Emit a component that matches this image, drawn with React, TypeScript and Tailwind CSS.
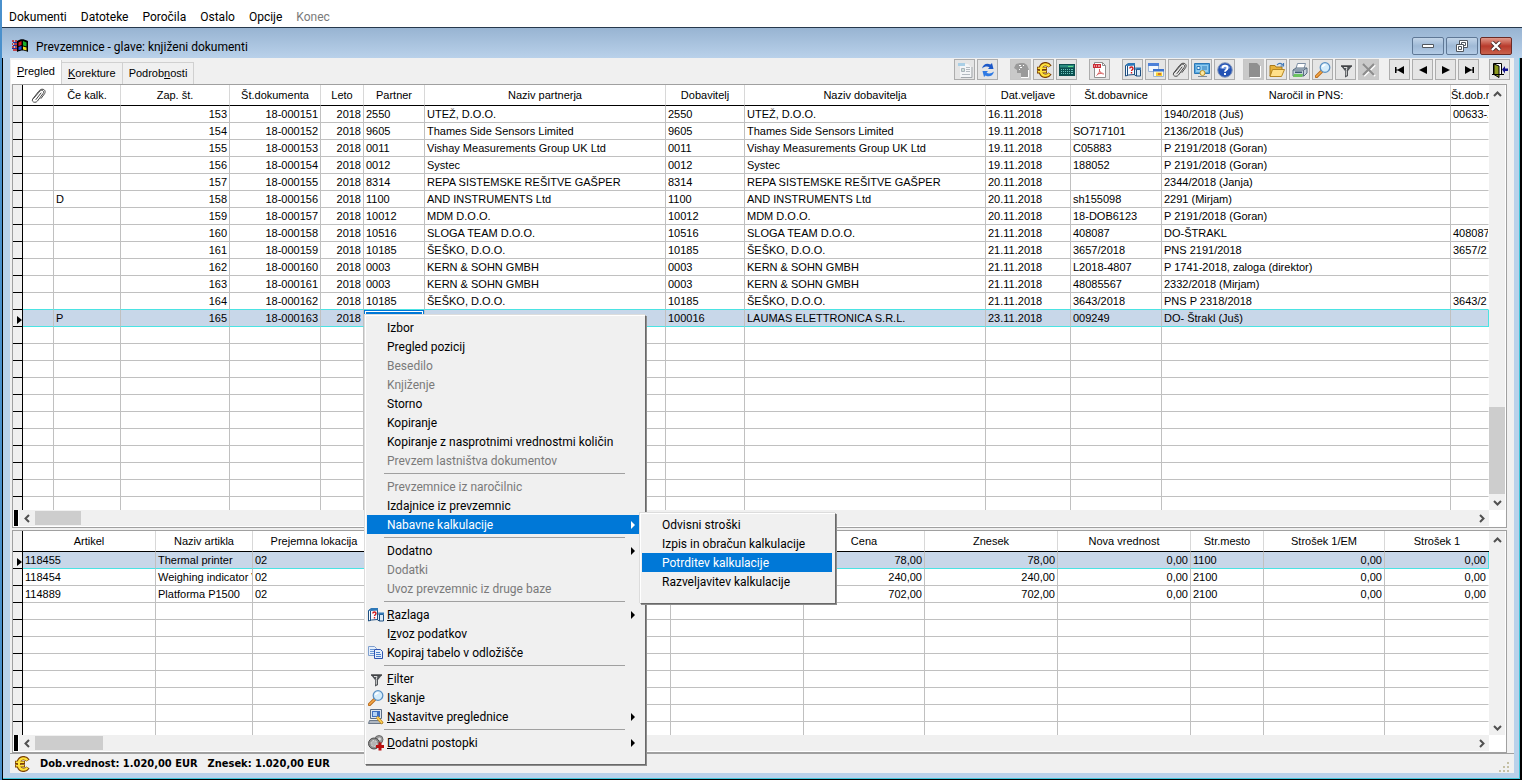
import { useState } from 'react';
import type { ReactNode } from 'react';
import clsx from 'clsx';

type Align = 'left' | 'right';

interface Column {
  title: ReactNode;
  width?: number;
  align?: Align;
}

interface MenuEntry {
  label: string;
  hotkey?: number;
  icon?: ReactNode;
  disabled?: boolean;
  submenu?: boolean;
}

/* ---------- icons ---------- */

function Icon({ children, size = 16 }: { children: ReactNode; size?: number }) {
  return (
    <svg viewBox="0 0 16 16" width={size} height={size} fill="none" aria-hidden="true" className="block shrink-0">
      {children}
    </svg>
  );
}

const ReportIcon = () => (
  <Icon>
    <path d="M3 2h8l3 3v10H3z" fill="#f3f5f7" />
    <path d="M4 15.500h11V5" stroke="#a3a8ad" />
    <path d="M1 1h7v3H1z" fill="#a9cfe6" />
    <path d="M9 5.500h4M9 7.500h4M9 9.500h4M5 12.500h8" stroke="#b4bbc1" />
    <path d="M4.500 6.500h3v3h-3z" fill="#cfe0d8" stroke="#a9b3bb" />
  </Icon>
);

const RefreshIcon = () => (
  <Icon>
    <path d="M2 6.500C3 2 7 .500 10.500 2.500L12 1l1.500 6H8l1.500-1.800C7 4 4.500 4.500 2 6.500z" fill="#1c58c8" />
    <path d="M14 9.500c-1 4.500-5 6-8.500 4L4 15 2.500 9H8l-1.500 1.800C9 12 11.500 11.500 14 9.500z" fill="#2f7ae4" />
  </Icon>
);

const StampIcon = () => (
  <Icon>
    <path d="M1 6l2-4 4-1h4l3 2 2 5v7H8v-4H4V8z" fill="#9a9a9a" />
    <path d="M6 3.500h2M10 3.500h1M7 5.500h2M6 7.500h1" stroke="#fff" />
    <path d="M15.500 8v7.500H8" stroke="#fff" />
  </Icon>
);

const EuroIcon = () => (
  <Icon>
    <path d="M14 4.500C11.500.800 6 1.200 4.800 5.500v5c1.200 4.300 6.700 4.700 9.200 1" stroke="#7a3f00" strokeWidth="4" />
    <path d="M1 6.300h10M1 9.800h10" stroke="#7a3f00" strokeWidth="3.200" />
    <path d="M13.500 4.200C11 1.300 6.500 1.700 5 5.500v5c1.500 3.800 6 4.200 8.500 1.300" stroke="#ffe23c" strokeWidth="2.200" />
    <path d="M1.800 6.300h8.400M1.800 9.800h8.400" stroke="#ffe23c" strokeWidth="1.600" />
  </Icon>
);

const CalculatorIcon = () => (
  <Icon>
    <path d="M0 2h16v12H0z" fill="#0b4f4f" />
    <path d="M1 3h14v2.500H1z" fill="#2a8a80" />
    <path d="M9 4.500h5" stroke="#5fe08a" />
    <path
      d="M2 7.500h1m1 0h1m1 0h1m1 0h1m1 0h1m1 0h2M2 9.500h1m1 0h1m1 0h1m1 0h1m1 0h1m1 0h2M2 11.500h1m1 0h1m1 0h1m1 0h1m1 0h1m1 0h2"
      stroke="#6cc4bd"
    />
  </Icon>
);

const PdfIcon = () => (
  <Icon>
    <path d="M2.500.500h8l3 3v12h-11z" fill="#fff" stroke="#8f8f8f" />
    <path d="M10.500.500v3h3" stroke="#8f8f8f" />
    <path d="M1 2h8v4H1z" fill="#cc2a33" />
    <path d="M2 4h1m1 0h1m1 0h2" stroke="#fff" />
    <path d="M7.500 7c.500 3-1 5-3 6.500M7.500 8.500c1 2.500 2.500 3.500 4.500 3.500M5.500 12l5-1" stroke="#d86060" />
  </Icon>
);

const ExplainIcon = () => (
  <Icon>
    <path d="M.500 3.500l3-2h6v11l-6 .500-3 1z" fill="#f7fbff" stroke="#1f4f80" />
    <path d="M0 3.500l3.500-2.500H10v2.500L3 4z" fill="#2e78b8" />
    <path d="M2.500 4v9.500" stroke="#1f4f80" />
    <path d="M4.800 6.500c0-2 3.200-2 3.200 0 0 1.200-1.500 1.200-1.500 2.500M6.500 10v1.500" stroke="#d01818" strokeWidth="1.400" />
    <path d="M9.500 6.500l2 1h4v6.500h-4l-2-1z" fill="#dcebf8" stroke="#1f4f80" />
    <path d="M10 5.500h6v2h-4z" fill="#2e78b8" />
    <path d="M11.500 7.500v6.500" stroke="#1f4f80" />
  </Icon>
);

const WindowsIcon = () => (
  <Icon>
    <path d="M.500 1.500h10v8h-10z" fill="#f4f8fd" stroke="#9db5d4" />
    <path d="M0 1h11v3H0z" fill="#4c80d8" />
    <path d="M5.500 7.500h10v7h-10z" fill="#fffbe0" stroke="#9db5d4" />
    <path d="M5 7h11v2.500H5z" fill="#3c72cf" />
    <path d="M8 10.500h6V14H8z" fill="#f5cf30" />
    <path d="M10 12h3" stroke="#c02020" />
  </Icon>
);

const ClipIcon = () => (
  <Icon>
    <path
      d="M3.500 10.500L10 3c1.800-1.800 4.700 0 3.200 2.300L7.500 13c-2 2.600-6.500 1-4.800-2L8.500 3.500c1.500-2 3-2.500 4.500-2.200 2.500.600 2.500 3 1.500 4.500L11 10.500M6 11.500l5-6.500"
      stroke="#484848"
      strokeLinecap="round"
    />
  </Icon>
);

const CertificateIcon = () => (
  <Icon>
    <path d="M.500 1.500h15v10H.500z" fill="#58a6dc" stroke="#2b78b8" />
    <path d="M2 3h12v7H2z" fill="#8ecbf0" />
    <path d="M3 4.500h3v3H3zM8 5h5M8 7h5" stroke="#2b78b8" fill="#e8f5ff" />
    <circle cx="8.500" cy="11" r="2.500" fill="#ffe9a0" stroke="#b8912a" />
    <path d="M4 14.500h9" stroke="#7f8d99" />
  </Icon>
);

const HelpIcon = () => (
  <Icon>
    <circle cx="8" cy="8" r="7.300" fill="#2453b4" stroke="#8b9cbc" />
    <path d="M2.500 6c1.500-4.500 9.500-4.500 11 0-3 1.500-8 1.500-11 0z" fill="#6d93dc" />
    <path d="M5.500 6.200c0-3.400 5-3.200 5-.200 0 2-2.500 1.800-2.500 3.800M8 11v2" stroke="#fff" strokeWidth="1.900" />
  </Icon>
);

const NewIcon = () => (
  <Icon>
    <path d="M3 1h8l3 3v11H3z" fill="#8f8f8f" />
    <path d="M14.500 4v11.500H4" stroke="#fff" />
  </Icon>
);

const OpenIcon = () => (
  <Icon>
    <path d="M1 3.500h5l1 1.500h6v3H4l-3 6z" fill="#e8b23a" stroke="#a87a1c" />
    <path d="M3.500 7.500h12l-3 7H1z" fill="#ffe08a" stroke="#b58622" />
    <path d="M8 3c2-2.500 4.500-2 5.500 0M14.500 1v3h-3" stroke="#3f78b8" strokeWidth="1.200" />
  </Icon>
);

const PrintIcon = () => (
  <Icon>
    <path d="M5.500 1.500h8l-1.500 5H4z" fill="#fff" stroke="#7d8ea3" />
    <path d="M1 8l3-2h11v5l-3 3H1z" fill="#c4d0dc" stroke="#5b6e82" />
    <path d="M1 8h10.500v6M11.500 8L15 6" stroke="#5b6e82" />
    <path d="M3 9.500h7v1.500H3z" fill="#3f5972" />
    <path d="M2 12h9l-1 3H1z" fill="#6cc45e" />
  </Icon>
);

const SearchIcon = () => (
  <Icon>
    <path d="M6.500 9.500L1.500 14.500" stroke="#b8681a" strokeWidth="3.200" strokeLinecap="round" />
    <path d="M6.300 9.700L1.600 14.300" stroke="#f5aa48" strokeWidth="1.600" strokeLinecap="round" />
    <circle cx="10" cy="5.500" r="4.800" fill="#d4ecfb" stroke="#5b91c4" strokeWidth="1.300" />
    <path d="M7.500 5c.300-1.500 1.500-2.300 3-2.300" stroke="#fff" strokeWidth="1.400" />
  </Icon>
);

const FilterIcon = () => (
  <Icon>
    <path d="M3 4h11l-4 5v5l-3 1.500V9z" fill="#505458" />
    <path d="M3 4h11" stroke="#3b3d40" strokeWidth="1.400" />
    <path d="M6 5.500h3L8.300 8.500v5" stroke="#dcdcdc" />
  </Icon>
);

const DeleteIcon = () => (
  <Icon>
    <path d="M3 3l11 11M14 3L3 14" stroke="#fff" strokeWidth="2.200" />
    <path d="M2 2l11 11M13 2L2 13" stroke="#8c8c8c" strokeWidth="2.200" />
  </Icon>
);

const FirstIcon = () => (
  <Icon><path d="M3 5h1.500v6H3zM5 8l7-4v8zM4 7.500h3v1H4z" fill="#000" /></Icon>
);
const PrevIcon = () => (
  <Icon><path d="M4 8l8-4v8z" fill="#000" /></Icon>
);
const NextIcon = () => (
  <Icon><path d="M12 8L4 4v8z" fill="#000" /></Icon>
);
const LastIcon = () => (
  <Icon><path d="M13 5h-1.500v6H13zM11 8L4 4v8zM12 7.500H9v1h3z" fill="#000" /></Icon>
);

const ExitIcon = () => (
  <Icon>
    <path d="M1.500 12.500v-11h8v11" fill="#fff" stroke="#000" />
    <path d="M2 2l5 2v11.500l-5-3z" fill="#8c9a1e" stroke="#000" />
    <path d="M10 7.500l3-3.500v2.500h3v2.500h-3v2.500z" fill="#10108c" />
    <path d="M0 12.500h12" stroke="#000" />
  </Icon>
);

const CopyIcon = () => (
  <Icon>
    <path d="M.500 1.500h6l2 2v7h-8z" fill="#e4eefb" stroke="#7f9fce" />
    <path d="M2 4.500h4M2 6.500h5M2 8.500h4" stroke="#6a98d6" />
    <path d="M6.500 4.500h6l2 2v7h-8z" fill="#e4eefb" stroke="#2f55b0" />
    <path d="M8 7.500h4M8 9.500h5M8 11.500h5" stroke="#4b80cc" />
  </Icon>
);

const GridSettingsIcon = () => (
  <Icon>
    <path d="M2.500.500h11v9h-11z" fill="#dfe6ee" stroke="#5c6d84" />
    <path d="M4 2h8v6H4z" fill="#3f6fbf" />
    <path d="M5 3h4v4H5z" fill="#b5d2f4" />
    <path d="M1.500 11.500h11l2 3h-14z" fill="#aeb6c0" stroke="#6b7889" />
    <path d="M9 8l5.500 6.500" stroke="#c88c1c" strokeWidth="3" />
    <path d="M9 8l5 6" stroke="#ffd45a" strokeWidth="1.300" />
  </Icon>
);

const GearsIcon = () => (
  <Icon>
    <circle cx="11" cy="4.500" r="4" fill="#9c9c9c" stroke="#6a6a6a" />
    <circle cx="11.500" cy="4" r="1.500" fill="#dcdcdc" />
    <circle cx="6" cy="8.500" r="5.500" fill="#8f8f8f" stroke="#4c4c4c" />
    <circle cx="6" cy="8.500" r="3" fill="#b4b4b4" stroke="#e0e0e0" strokeDasharray="2 1" />
    <path d="M12 7.500v8M8 11.500h8" stroke="#b81010" strokeWidth="3" />
  </Icon>
);

const AppIcon = () => (
  <Icon>
    <path d="M0 3h2M3 3h2M0 6h1M2 6h3M0 9h2M3 9h2M1 12h4" stroke="#c01818" strokeWidth="1.500" />
    <path d="M1 4.500h4M1 7.500h4M0 10.500h5" stroke="#2030a0" />
    <path d="M5 3c4-2.500 6-2.500 11 0v11c-4-2-7-2-11 0z" fill="#000" />
    <path d="M6.500 4.500L9.500 3v4l-3 1z" fill="#e01818" />
    <path d="M11 3l3.500 1.500v4L11 7.500z" fill="#18b028" />
    <path d="M6.500 9l3-1v3.500l-3 .500z" fill="#2050e0" />
    <path d="M11 8.500l3.500 1v3L11 11.500z" fill="#f0e020" />
  </Icon>
);

/* ---------- data ---------- */

const docColumns: Column[] = [
  { title: <span className="inline-flex align-middle"><ClipIcon /></span>, width: 31 },
  { title: 'Če kalk.', width: 67 },
  { title: 'Zap. št.', width: 109, align: 'right' },
  { title: 'Št.dokumenta', width: 91, align: 'right' },
  { title: 'Leto', width: 43, align: 'right' },
  { title: 'Partner', width: 61 },
  { title: 'Naziv partnerja', width: 241 },
  { title: 'Dobavitelj', width: 79 },
  { title: 'Naziv dobavitelja', width: 241 },
  { title: 'Dat.veljave', width: 85 },
  { title: 'Št.dobavnice', width: 91 },
  { title: 'Naročil in PNS:', width: 289 },
  { title: 'Št.dob.r' },
];

function doc(no: number, calc: string, partner: string, name: string, date: string, note: string, order: string, extra = '') {
  return ['', calc, String(no), `18-000${no - 2}`, '2018', partner, name, partner, name, date, note, order, extra];
}

const docRows = [
  doc(153, '', '2550', 'UTEŽ, D.O.O.', '16.11.2018', '', '1940/2018 (Juš)', '00633-2'),
  doc(154, '', '9605', 'Thames Side Sensors Limited', '19.11.2018', 'SO717101', '2136/2018 (Juš)'),
  doc(155, '', '0011', 'Vishay Measurements Group UK Ltd', '19.11.2018', 'C05883', 'P 2191/2018 (Goran)'),
  doc(156, '', '0012', 'Systec', '19.11.2018', '188052', 'P 2191/2018 (Goran)'),
  doc(157, '', '8314', 'REPA SISTEMSKE REŠITVE GAŠPER', '20.11.2018', '', '2344/2018 (Janja)'),
  doc(158, 'D', '1100', 'AND INSTRUMENTS Ltd', '20.11.2018', 'sh155098', '2291 (Mirjam)'),
  doc(159, '', '10012', 'MDM D.O.O.', '20.11.2018', '18-DOB6123', 'P 2191/2018 (Goran)'),
  doc(160, '', '10516', 'SLOGA TEAM D.O.O.', '21.11.2018', '408087', 'DO-ŠTRAKL', '408087'),
  doc(161, '', '10185', 'ŠEŠKO, D.O.O.', '21.11.2018', '3657/2018', 'PNS 2191/2018', '3657/2'),
  doc(162, '', '0003', 'KERN & SOHN GMBH', '21.11.2018', 'L2018-4807', 'P 1741-2018, zaloga (direktor)'),
  doc(163, '', '0003', 'KERN & SOHN GMBH', '21.11.2018', '48085567', '2332/2018 (Mirjam)'),
  doc(164, '', '10185', 'ŠEŠKO, D.O.O.', '21.11.2018', '3643/2018', 'PNS P 2318/2018', '3643/2'),
  doc(165, 'P', '100016', 'LAUMAS ELETTRONICA S.R.L.', '23.11.2018', '009249', 'DO- Štrakl (Juš)'),
];

const itemColumns: Column[] = [
  { title: 'Artikel', width: 133 },
  { title: 'Naziv artikla', width: 97 },
  { title: 'Prejemna lokacija', width: 123 },
  { title: '', width: 148 },
  { title: '', width: 147 },
  { title: '', width: 133 },
  { title: 'Cena', width: 121, align: 'right' },
  { title: 'Znesek', width: 133, align: 'right' },
  { title: 'Nova vrednost', width: 133, align: 'right' },
  { title: 'Str.mesto', width: 73 },
  { title: 'Strošek 1/EM', width: 121, align: 'right' },
  { title: 'Strošek 1', align: 'right' },
];

const itemRows = [
  ['118455', 'Thermal printer', '02', '', '', '', '78,00', '78,00', '0,00', '1100', '0,00', '0,00'],
  ['118454', 'Weighing indicator V', '02', '', '', '', '240,00', '240,00', '0,00', '2100', '0,00', '0,00'],
  ['114889', 'Platforma P1500', '02', '', '', '', '702,00', '702,00', '0,00', '2100', '0,00', '0,00'],
];

const menuSections: MenuEntry[][] = [
  [
    { label: 'Izbor' },
    { label: 'Pregled pozicij' },
    { label: 'Besedilo', disabled: true },
    { label: 'Knjiženje', disabled: true },
    { label: 'Storno' },
    { label: 'Kopiranje' },
    { label: 'Kopiranje z nasprotnimi vrednostmi količin' },
    { label: 'Prevzem lastništva dokumentov', disabled: true },
  ],
  [
    { label: 'Prevzemnice iz naročilnic', disabled: true },
    { label: 'Izdajnice iz prevzemnic' },
    { label: 'Nabavne kalkulacije', submenu: true },
  ],
  [
    { label: 'Dodatno', submenu: true },
    { label: 'Dodatki', disabled: true },
    { label: 'Uvoz prevzemnic iz druge baze', disabled: true },
  ],
  [
    { label: 'Razlaga', hotkey: 0, icon: <ExplainIcon />, submenu: true },
    { label: 'Izvoz podatkov', hotkey: 1 },
    { label: 'Kopiraj tabelo v odložišče', icon: <CopyIcon /> },
  ],
  [
    { label: 'Filter', hotkey: 0, icon: <FilterIcon /> },
    { label: 'Iskanje', hotkey: 1, icon: <SearchIcon /> },
    { label: 'Nastavitve preglednice', hotkey: 0, icon: <GridSettingsIcon />, submenu: true },
  ],
  [{ label: 'Dodatni postopki', hotkey: 0, icon: <GearsIcon />, submenu: true }],
];

const submenuEntries: MenuEntry[] = [
  { label: 'Odvisni stroški' },
  { label: 'Izpis in obračun kalkulacije' },
  { label: 'Potrditev kalkulacije' },
  { label: 'Razveljavitev kalkulacije' },
];

const toolbar = [
  { className: '', items: [{ name: 'Izpis', icon: <ReportIcon /> }, { name: 'Osveži', icon: <RefreshIcon /> }] },
  {
    className: 'ml-3',
    items: [
      { name: 'Žig', icon: <StampIcon />, disabled: true },
      { name: 'Valuta', icon: <EuroIcon /> },
      { name: 'Kalkulator', icon: <CalculatorIcon /> },
    ],
  },
  { className: 'ml-3', items: [{ name: 'PDF', icon: <PdfIcon /> }] },
  {
    className: 'ml-3',
    items: [
      { name: 'Razlaga', icon: <ExplainIcon /> },
      { name: 'Okna', icon: <WindowsIcon /> },
      { name: 'Priponke', icon: <ClipIcon /> },
      { name: 'Potrdilo', icon: <CertificateIcon /> },
      { name: 'Pomoč', icon: <HelpIcon /> },
    ],
  },
  {
    className: 'ml-2',
    items: [
      { name: 'Novo', icon: <NewIcon />, disabled: true },
      { name: 'Odpri', icon: <OpenIcon /> },
      { name: 'Tiskaj', icon: <PrintIcon /> },
      { name: 'Iskanje', icon: <SearchIcon /> },
      { name: 'Filter', icon: <FilterIcon /> },
      { name: 'Briši', icon: <DeleteIcon />, disabled: true },
    ],
  },
  {
    className: 'ml-2.5',
    items: [
      { name: 'Prvi', icon: <FirstIcon /> },
      { name: 'Prejšnji', icon: <PrevIcon /> },
      { name: 'Naslednji', icon: <NextIcon /> },
      { name: 'Zadnji', icon: <LastIcon /> },
    ],
  },
  { className: 'ml-2.5', items: [{ name: 'Izhod', icon: <ExitIcon /> }] },
];

/* ---------- pieces ---------- */

function Hotkey({ label, at }: { label: string; at?: number }) {
  if (at === undefined) return <>{label}</>;
  return (
    <>
      {label.slice(0, at)}
      <span className="underline">{label[at]}</span>
      {label.slice(at + 1)}
    </>
  );
}

function Chevron({ d }: { d: string }) {
  return (
    <svg viewBox="0 0 9 9" width="9" height="9" fill="none" stroke="#505050" strokeWidth="2" aria-hidden="true">
      <path d={d} />
    </svg>
  );
}

interface GridProps {
  label: string;
  columns: Column[];
  rows: string[][];
  selected: number;
  editColumn?: number;
  emptyRows: number;
  thumbClass?: string;
  hThumbClass: string;
  className: string;
}

function Grid({ label, columns, rows, selected, editColumn, emptyRows, thumbClass, hThumbClass, className }: GridProps) {
  const blank = Array.from({ length: emptyRows }, () => columns.map(() => ''));
  const last = columns.length - 1;
  return (
    <section className={clsx('flex min-h-0 flex-col border border-[#a0a0a0] bg-white pr-px', className)}>
      <div className="flex min-h-0 flex-1">
        <div className="min-w-0 flex-1 overflow-hidden">
          <table aria-label={label} className="w-full table-fixed border-separate border-spacing-0 text-[11px] leading-4">
            <colgroup>
              <col style={{ width: 10 }} />
              {columns.map((c, i) => (
                <col key={i} style={c.width ? { width: c.width } : undefined} />
              ))}
            </colgroup>
            <thead>
              <tr className="h-[21px]">
                <th className="border-r border-b border-black bg-[#f0f0f0] p-0" />
                {columns.map((c, i) => (
                  <th
                    key={i}
                    className={clsx(
                      'overflow-hidden border-b border-black p-0 font-normal whitespace-nowrap',
                      i < last && 'border-r border-r-[#d8d8d8]',
                      i < last || c.align ? 'text-center' : 'text-left',
                    )}
                  >
                    {c.title}
                  </th>
                ))}
              </tr>
            </thead>
            <tbody>
              {[...rows, ...blank].map((row, r) => {
                const active = r === selected;
                // the row above the selected one closes its frame
                const line = active || r === selected - 1 ? 'border-b-[#4be3e3]' : 'border-b-[#c0c0c0]';
                return (
                  <tr key={r} className={clsx('h-[17px]', active && 'bg-[#c8d7e9]')}>
                    <td className="border-r border-b border-black bg-[#f0f0f0] p-0">
                      {active && (
                        <svg viewBox="0 0 5 8" width="5" height="8" className="mt-1 ml-auto block" aria-hidden="true">
                          <path d="M0 0l5 4-5 4z" fill="#000" />
                        </svg>
                      )}
                    </td>
                    {row.map((value, i) => (
                      <td
                        key={i}
                        className={clsx(
                          'overflow-hidden border-r border-b py-0 whitespace-nowrap',
                          line,
                          i < last ? 'border-r-[#c0c0c0]' : active ? 'border-r-[#4be3e3]' : 'border-r-transparent',
                          active && i === editColumn ? 'pl-0' : 'pl-0.5',
                          columns[i].align === 'right' ? 'pr-0.5 text-right' : 'pr-0',
                        )}
                      >
                        {active && i === editColumn ? (
                          <input
                            aria-label="Partner"
                            defaultValue={value}
                            className="block h-4 w-full border border-[#0078d7] bg-[#0078d7] px-0.5 text-white outline-1 -outline-offset-2 outline-white"
                          />
                        ) : (
                          value
                        )}
                      </td>
                    ))}
                  </tr>
                );
              })}
            </tbody>
          </table>
        </div>
        <div className="flex w-4 shrink-0 flex-col items-center bg-[#f0f0f0]">
          <button type="button" aria-label="Gor" className="flex h-[18px] w-full items-center justify-center">
            <Chevron d="M1 6l3.500-3.500L8 6" />
          </button>
          <div className="flex w-full flex-1 flex-col justify-end">
            {thumbClass && <div className={clsx('w-full bg-[#cdcdcd]', thumbClass)} />}
          </div>
          <button type="button" aria-label="Dol" className="flex h-4 w-full items-center justify-center">
            <Chevron d="M1 3l3.500 3.500L8 3" />
          </button>
        </div>
      </div>
      <div className="flex h-[17px] shrink-0 pr-4 pb-px">
        <div className="mr-px ml-px w-1 bg-black" />
        <div className="flex flex-1 items-center bg-[#f0f0f0]">
          <button type="button" aria-label="Levo" className="flex w-4 justify-center">
            <Chevron d="M6 1L2.500 4.500 6 8" />
          </button>
          <div className={clsx('h-3.5 bg-[#cdcdcd]', hThumbClass)} />
          <button type="button" aria-label="Desno" className="ml-auto flex w-4 justify-center">
            <Chevron d="M3 1l3.500 3.500L3 8" />
          </button>
        </div>
      </div>
    </section>
  );
}

const menuFrame =
  'absolute border border-t-white border-l-white border-r-[#696969] border-b-[#696969] bg-[#f0f0f0] shadow-[-1px_-1px_0_#dcdcdc,1px_1px_0_#8c8c8c]';

function MenuItem({ entry, active, onHover }: { entry: MenuEntry; active: boolean; onHover: () => void }) {
  return (
    <button
      type="button"
      role="menuitem"
      disabled={entry.disabled}
      aria-haspopup={entry.submenu ? 'menu' : undefined}
      onMouseEnter={onHover}
      className={clsx(
        'flex h-[19px] w-full items-center pr-1 text-left whitespace-nowrap',
        active ? 'bg-[#0078d7] text-white' : entry.disabled ? 'text-[#7a7a7a]' : 'text-black',
      )}
    >
      <span className="w-5 shrink-0 pl-px">{entry.icon}</span>
      <span className="flex-1">
        <Hotkey label={entry.label} at={entry.hotkey} />
      </span>
      {entry.submenu && (
        <svg viewBox="0 0 4 8" width="4" height="8" aria-hidden="true">
          <path d="M0 0l4 4-4 4z" fill="currentColor" />
        </svg>
      )}
    </button>
  );
}

function ContextMenu() {
  const [active, setActive] = useState('Nabavne kalkulacije');
  const [subActive, setSubActive] = useState('Potrditev kalkulacije');

  return (
    <>
      <div role="menu" className={clsx(menuFrame, 'top-[315px] left-[363px] w-[281px] pt-0.5 pr-1.5 pb-3 pl-px')}>
        {menuSections.map((section, s) => (
          <div key={s}>
            {s > 0 && <div className="my-[3px] mr-3.5 ml-[17px] h-px bg-[#a0a0a0]" />}
            {section.map((entry) => (
              <MenuItem
                key={entry.label}
                entry={entry}
                active={entry.label === active}
                onHover={() => !entry.disabled && setActive(entry.label)}
              />
            ))}
          </div>
        ))}
      </div>
      {active === 'Nabavne kalkulacije' && (
        <div role="menu" className={clsx(menuFrame, 'top-[513px] left-[638px] w-[196px] pt-px pr-[3px] pb-3 pl-px')}>
          {submenuEntries.map((entry) => (
            <MenuItem
              key={entry.label}
              entry={entry}
              active={entry.label === subActive}
              onHover={() => setSubActive(entry.label)}
            />
          ))}
        </div>
      )}
    </>
  );
}

const tabs = [
  { label: 'Pregled', hotkey: 0 },
  { label: 'Korekture', hotkey: 0 },
  { label: 'Podrobnosti', hotkey: 6 },
];

function WindowButton({ name, close, children }: { name: string; close?: boolean; children: ReactNode }) {
  return (
    <button
      type="button"
      aria-label={name}
      className={clsx(
        'flex h-[18px] w-8 items-center justify-center rounded-xs border',
        close
          ? 'border-[#6b2a24] bg-linear-to-b from-[#e0998c] via-[#b83a2c] to-[#c8614c]'
          : 'border-[#5f7896] bg-linear-to-b from-[#c3d5e9] via-[#9fb9d6] to-[#b4cce6]',
      )}
    >
      {children}
    </button>
  );
}

export default function App() {
  const [tab, setTab] = useState('Pregled');

  return (
    <div className="relative flex h-screen flex-col overflow-hidden border-l-2 border-[#4a90cc] bg-white font-[Roboto,'Open_Sans',sans-serif] text-[12px] leading-4 text-black">
      <nav className="flex h-[27px] shrink-0 items-center gap-3.5 pt-1.5 pl-[7px]">
        {['Dokumenti', 'Datoteke', 'Poročila', 'Ostalo', 'Opcije'].map((m) => (
          <button key={m} type="button">{m}</button>
        ))}
        <button type="button" disabled className="text-[#7a7a7a]">Konec</button>
      </nav>

      <div className="flex min-h-0 flex-1 flex-col border-t border-[#26384c] bg-[#b9d1ea]">
        <header className="flex h-[30px] shrink-0 items-center bg-linear-to-b from-[#98b4d2] to-[#b9d1ea] pt-1.5 pr-2.5 pl-2.5">
          <AppIcon />
          <h1 className="ml-2 flex-1 pt-0.5">Prevzemnice - glave: knjiženi dokumenti</h1>
          <div className="flex gap-0.5">
            <WindowButton name="Pomanjšaj">
              <svg viewBox="0 0 12 6" width="12" height="6"><path d="M.500 1.500h11v3H.500z" fill="#fff" stroke="#50565e" /></svg>
            </WindowButton>
            <WindowButton name="Obnovi">
              <svg viewBox="0 0 12 12" width="12" height="12" fill="#fff" stroke="#50565e">
                <path d="M3.500.500h8v7h-8z" />
                <path d="M5.500 2.500h4v3h-4z" />
                <path d="M.500 4.500h7v7h-7z" />
                <path d="M2.500 6.500h3v3h-3z" />
              </svg>
            </WindowButton>
            <WindowButton name="Zapri" close>
              <svg viewBox="0 0 12 10" width="12" height="10">
                <path d="M2 1l8 8M10 1L2 9" stroke="#4a2a28" strokeWidth="4" />
                <path d="M2 1l8 8M10 1L2 9" stroke="#fff" strokeWidth="2.400" />
              </svg>
            </WindowButton>
          </div>
        </header>

        <div className="flex min-h-0 flex-1 flex-col border-r-2 border-b border-l border-black">
          <div className="flex min-h-0 flex-1 flex-col border-r border-b border-[#3fc4d8] pr-[5px] pb-[5px] pl-[7px]">
            <main className="flex min-h-0 flex-1 flex-col bg-[#f0f0f0] font-['Liberation_Sans',Arial,sans-serif]">
              <div className="flex h-[26px] shrink-0 items-end justify-between pr-1 pl-px">
                <div role="tablist" className="flex items-end text-[11px]">
                  {tabs.map((t) => (
                    <button
                      key={t.label}
                      type="button"
                      role="tab"
                      aria-selected={t.label === tab}
                      onClick={() => setTab(t.label)}
                      className={clsx(
                        'border-r border-[#d0d0d0] px-1.5',
                        t.label === tab ? 'h-6 bg-white pb-0.5' : 'h-[22px] border-t pb-0.5',
                      )}
                    >
                      <Hotkey label={t.label} at={t.hotkey} />
                    </button>
                  ))}
                </div>
                <div role="toolbar" className="flex pb-1">
                  {toolbar.map((group, g) => (
                    <div key={g} className={clsx('flex gap-0.5', group.className)}>
                      {group.items.map((item) => (
                        <button
                          key={item.name}
                          type="button"
                          aria-label={item.name}
                          className={clsx(
                            'flex size-[21px] items-center justify-center border',
                            'disabled' in item ? 'border-[#c6c6c6] bg-[#c9c9c9]' : 'border-[#adadad] bg-[#e5e5e5]',
                          )}
                        >
                          {item.icon}
                        </button>
                      ))}
                    </div>
                  ))}
                </div>
              </div>

              <div className="mr-[7px] ml-0.5 flex min-h-0 flex-1 flex-col gap-0.5">
                <Grid
                  label="Prevzemnice"
                  columns={docColumns}
                  rows={docRows}
                  selected={12}
                  editColumn={5}
                  emptyRows={14}
                  thumbClass="h-[87px]"
                  hThumbClass="w-[46px]"
                  className="flex-[2]"
                />
                <Grid
                  label="Pozicije"
                  columns={itemColumns}
                  rows={itemRows}
                  selected={0}
                  emptyRows={12}
                  hThumbClass="w-[68px]"
                  className="flex-1"
                />
              </div>

              <footer className="flex h-5 shrink-0 items-center justify-between border-t border-[#a0a0a0] pr-1 pl-1 font-['DejaVu_Sans_Condensed','Open_Sans',sans-serif] text-[11px] font-bold">
                <div className="flex items-center">
                  <EuroIcon />
                  <span className="ml-2.5">Dob.vrednost: 1.020,00 EUR</span>
                  <span className="ml-2.5">Znesek: 1.020,00 EUR</span>
                </div>
                <svg viewBox="0 0 12 12" width="12" height="12" fill="#c4c0a4" aria-hidden="true" className="self-end">
                  <path d="M9 1h2v2H9zM5 5h2v2H5zM9 5h2v2H9zM1 9h2v2H1zM5 9h2v2H5zM9 9h2v2H9z" />
                </svg>
              </footer>
            </main>
          </div>
        </div>
      </div>

      <ContextMenu />
    </div>
  );
}
